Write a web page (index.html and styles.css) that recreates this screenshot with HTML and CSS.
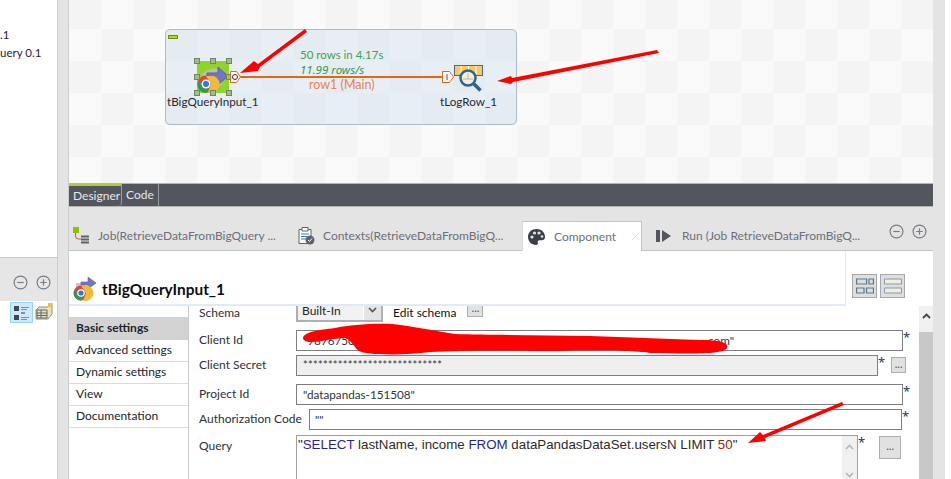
FILE: index.html
```html
<!DOCTYPE html>
<html>
<head>
<meta name="viewport" content="width=device-width, initial-scale=1">
<link rel="stylesheet" href="styles.css">
</head>
<body>
<div class="app">

  <div class="left">
    <div class="repo">
      <div>.1</div>
      <div>uery 0.1</div>
    </div>
    <div class="left-bar">
      <svg class="round-btn" viewBox="0 0 14 14"><circle cx="7" cy="7" r="6" /><path d="M4 7h6" /></svg>
      <svg class="round-btn" viewBox="0 0 14 14"><circle cx="7" cy="7" r="6" /><path d="M4 7h6M7 4v6" /></svg>
    </div>
    <div class="left-tools">
      <span class="tool-on">
        <svg width="18" height="18" viewBox="0 0 18 18"><path fill="#3f4650" d="M1 2h5v5H1zM1 11h5v5H1z"/><path fill="#8a8f96" d="M8 8h4v2H8zM8 3h8v1H8zM8 5h6v1H8zM8 13h8v1H8zM8 15h6v1H8z"/></svg>
      </span>
      <svg width="18" height="18" viewBox="0 0 18 18"><path fill="#e6e3c4" stroke="#8f8f80" d="M4 5h9l4-4v11l-4 5H1V8z"/><path fill="none" stroke="#666" d="M2 8h10v8H2zM2 11h10M2 13.500h10M6 8v8"/><path fill="#e8c43a" d="M13 1h4v4h-4z"/></svg>
    </div>
  </div>

  <div class="sash"></div>

  <div class="main">
    <div class="designer">
      <div class="canvas">
        <div class="subjob">
          <span class="collapse"></span>
        </div>

        <div class="node node-input">
          <svg width="34" height="34" viewBox="0 0 34 34">
            <rect x="1" y="1" width="32" height="32" fill="#8fd42c"/>
            <path d="M6 14q10-9 22-3l-2 14q-10 5-18-1z" fill="#b7c2a8"/>
            <path d="M11 13h11V7l10 9-10 9v-6H11z" fill="#7275c0" stroke="#5b5ea8"/>
            <circle cx="10" cy="24" r="8.500" fill="#d9483b"/>
            <path d="M2 22a8.500 8.500 0 0 0 8 11l4-7-7-1z" fill="#2f9b52"/>
            <path d="M10 16h8a8.500 8.500 0 0 1-6 16l3-8z" fill="#f0bb3b"/>
            <circle cx="10" cy="24" r="4.500" fill="#fff"/>
            <circle cx="10" cy="24" r="3" fill="#3473e6"/>
          </svg>
          <i class="grip g1"></i><i class="grip g2"></i><i class="grip g3"></i>
          <i class="grip g4"></i><i class="grip g5"></i>
          <i class="grip g6"></i><i class="grip g7"></i><i class="grip g8"></i>
        </div>
        <div class="node-label label-input">tBigQueryInput_1</div>

        <div class="link"></div>
        <svg class="port port-out" width="11" height="12" viewBox="0 0 11 12"><path d="M.5.500h6l4 5.500-4 5.500h-6z" fill="#fff" stroke="#e8670c"/><circle cx="5" cy="6" r="2.500" fill="none" stroke="#333"/></svg>
        <svg class="port port-in" width="12" height="12" viewBox="0 0 12 12"><path d="M.5.500h7l4 5.500-4 5.500h-7z" fill="#fff" stroke="#e8670c"/><path d="M5 3v6" stroke="#7a3a50"/></svg>

        <div class="stats">
          <div class="stat-count">50 rows in 4.17s</div>
          <div class="stat-rate">11.99 rows/s</div>
          <div class="stat-row">row1 (Main)</div>
        </div>

        <svg class="node node-log" width="30" height="28" viewBox="0 0 30 28">
          <rect x=".5" y=".500" width="28" height="10" fill="#f9c85f" stroke="#3e6c94"/>
          <path d="M7 1v9M14.500 1v9M22 1v9" stroke="#fff"/>
          <circle cx="14" cy="13" r="7.500" fill="#f3efd8" stroke="#2e6492" stroke-width="2.500"/>
          <path d="M14 8v6M9 14h10" stroke="#b9b9a6"/>
          <path d="M19.500 18.500l7 7" stroke="#2e6492" stroke-width="3.500"/>
        </svg>
        <div class="node-label label-log">tLogRow_1</div>
      </div>
      <div class="designer-tabs">
        <div class="dtab dtab-on">Designer</div>
        <div class="dtab">Code</div>
      </div>
    </div>

    <div class="panel">
      <div class="tabs">
        <div class="tab tab-job">
          <svg width="17" height="17" viewBox="0 0 17 17"><path fill="#8cc200" d="M0 0h6v6H0z"/><path fill="none" stroke="#c9524e" d="M2.500 6v3q0 3 3 3H8"/><path fill="#5e626b" d="M8 8.500h8v2H8zM8 11.500h8v2H8zM8 14.500h8v2H8z"/></svg>
          <span>Job(RetrieveDataFromBigQuery ...</span>
        </div>
        <div class="tab tab-ctx">
          <svg width="17" height="18" viewBox="0 0 17 18"><path fill="#fff" stroke="#5e626b" d="M1 2.500h12v14H1z"/><path fill="#fff" stroke="#5e626b" d="M4 .500h6v3.500H4z"/><path stroke="#3a7ab8" d="M3 7h8M3 9.500h6M3 12h5"/><circle cx="12" cy="13" r="4.500" fill="#5e626b"/><path d="M10 13l1.500 1.500 2.500-3" fill="none" stroke="#fff"/></svg>
          <span>Contexts(RetrieveDataFromBigQ...</span>
        </div>
        <div class="tab tab-comp">
          <svg width="17" height="16" viewBox="0 0 17 16"><path fill="#3c3f46" d="M8.500 0C3.500 0 0 3.400 0 8c0 4.400 3.600 8 8 8 1.600 0 2.200-1 1.800-2.200-.5-1.400.2-2.600 1.800-2.600h2.400c1.800 0 3-1.200 3-3.200C17 3.400 13.500 0 8.500 0z"/><circle cx="4" cy="8" r="1.600" fill="#e4e4e4"/><circle cx="6.500" cy="4" r="1.600" fill="#e4e4e4"/><circle cx="11" cy="4" r="1.600" fill="#e4e4e4"/><circle cx="14" cy="7.500" r="1.300" fill="#e4e4e4"/></svg>
          <span class="comp-name">Component</span>
          <svg class="tab-close" width="9" height="9" viewBox="0 0 9 9"><path d="M.5.500l8 8M8.500.500l-8 8" stroke="#e2e2e2"/></svg>
        </div>
        <div class="tab tab-run">
          <svg width="15" height="12" viewBox="0 0 15 12"><path fill="#53565f" d="M0 0h4v12H0zM6 0l9 6-9 6z"/></svg>
          <span>Run (Job RetrieveDataFromBigQ...</span>
        </div>
        <div class="tab-btns">
          <svg class="round-btn" viewBox="0 0 14 14"><circle cx="7" cy="7" r="6" /><path d="M4 7h6" /></svg>
          <svg class="round-btn" viewBox="0 0 14 14"><circle cx="7" cy="7" r="6" /><path d="M4 7h6M7 4v6" /></svg>
        </div>
      </div>

      <div class="head">
        <div class="title-box">
          <svg width="24" height="24" viewBox="0 0 24 24">
            <path d="M3 6h9v10H3z" fill="#c5c7c9"/>
            <path d="M8 5h7V0l8 6-8 6V8H8z" fill="#7275c0" stroke="#5b5ea8" stroke-width=".6"/>
            <circle cx="8" cy="16" r="7.500" fill="#d9483b"/>
            <path d="M1 14a7.500 7.500 0 0 0 7 9.500l3.500-6-6-1z" fill="#2f9b52"/>
            <path d="M8 8.500h7a7.500 7.500 0 0 1-5 15l3-7z" fill="#f0bb3b"/>
            <circle cx="8" cy="16" r="3.800" fill="#fff"/>
            <circle cx="8" cy="16" r="2.600" fill="#3473e6"/>
          </svg>
          <span class="title">tBigQueryInput_1</span>
        </div>
        <div class="view-btn view-btn-first">
          <svg width="18" height="16" viewBox="0 0 18 16"><path fill="none" stroke="#5c7690" stroke-width="1.200" d="M.6 1h10v5H.6zM13 1h4.400v5H13zM.6 10h7.400v5H.6zM10.500 10h7v5h-7z"/></svg>
        </div>
        <div class="view-btn">
          <svg width="18" height="16" viewBox="0 0 18 16"><path fill="#f3eeda" stroke="#7f9dbd" d="M.5 1h17v5H.5zM.5 10h17v5H.5z"/></svg>
        </div>
      </div>

      <div class="body">
        <div class="nav">
          <div class="nav-item nav-on">Basic settings</div>
          <div class="nav-item">Advanced settings</div>
          <div class="nav-item">Dynamic settings</div>
          <div class="nav-item">View</div>
          <div class="nav-item">Documentation</div>
        </div>

        <div class="form">
          <div class="row row-schema">
            <label>Schema</label>
            <div class="select"><span>Built-In</span><i><svg width="9" height="6" viewBox="0 0 9 6"><path d="M1 1l3.500 3.500L8 1" fill="none" stroke="#555" stroke-width="1.600"/></svg></i></div>
            <span class="edit-schema">Edit schema</span>
            <div class="dots dots-small">...</div>
          </div>
          <div class="row row-client">
            <label>Client Id</label>
            <div class="input input-full"><span class="client-a">"987675098</span><span>.com"</span></div>
            <b class="req">*</b>
          </div>
          <div class="row row-secret">
            <label>Client Secret</label>
            <div class="input input-secret">****************************</div>
            <b class="req">*</b>
            <div class="dots dots-secret">...</div>
          </div>
          <div class="row row-project">
            <label>Project Id</label>
            <div class="input input-full">"datapandas-151508"</div>
            <b class="req">*</b>
          </div>
          <div class="row row-auth">
            <label class="label-auth">Authorization Code</label>
            <div class="input input-auth">""</div>
            <b class="req">*</b>
          </div>
          <div class="row row-query">
            <label>Query</label>
            <div class="query">
              <div class="sql">"<span class="kw">SELECT</span> lastName, income <span class="kw">FROM</span> dataPandasDataSet.usersN LIMIT <span class="num">50</span>"</div>
              <div class="query-scroll">
                <svg width="9" height="6" viewBox="0 0 9 6"><path d="M1 5l3.500-3.500L8 5" fill="none" stroke="#b5b5b5" stroke-width="1.600"/></svg>
                <svg width="9" height="6" viewBox="0 0 9 6"><path d="M1 1l3.500 3.500L8 1" fill="none" stroke="#b5b5b5" stroke-width="1.600"/></svg>
              </div>
            </div>
            <b class="req">*</b>
            <div class="dots dots-query">...</div>
          </div>
        </div>

        <div class="vscroll">
          <div class="vscroll-up"><svg width="9" height="6" viewBox="0 0 9 6"><path d="M1 5l3.500-3.500L8 5" fill="none" stroke="#444" stroke-width="1.800"/></svg></div>
          <div class="vscroll-thumb"></div>
        </div>
      </div>
    </div>
  </div>

  <div class="sash-right"></div>
</div>

<!-- red marks drawn over the screenshot -->
<svg class="marks" width="951" height="479" viewBox="0 0 951 479">
  <path fill="#f00" d="M240 73L254 61L258 64L305 29L307 32L260 67L258 71Z"/>
  <path fill="#f00" d="M497 81L511 76L512 78L657 50L659 53L513 82L511 84Z"/>
  <path fill="#f00" d="M748 443L760 432L763 435L842 402L844 405L765 438L766 441Z"/>
  <path fill="#f00" d="M303 338C304 332 318 330 335 328C350 325 372 323 392 324C410 326 430 330 455 334C490 335 540 335 590 336C630 337 660 339 700 340C722 340 729 343 727 348C724 354 700 354 650 353C640 351 600 350 560 351C510 351 470 350 430 352C415 354 395 355 380 354C365 354 358 352 355 347C352 343 350 340 345 338C330 338 305 347 303 338Z"/>
</svg>
</body>
</html>
```

FILE: styles.css
```css
html, body {
    margin: 0;
    padding: 0;
}

body {
    width: 951px;
    height: 479px;
    overflow: hidden;
    position: relative;
    background: #fff;
    font-family: Lato, "Noto Sans", sans-serif;
    font-size: 12px;
    color: #20242c;
}

.app {
    display: flex;
    height: 479px;
}

/* left column */
.left {
    width: 57px;
    display: flex;
    flex-direction: column;
    flex: none;
    overflow: hidden;
}

.repo {
    height: 258px;
    border-bottom: 1px solid #c8c8c8;
    box-sizing: border-box;
    padding-top: 26px;
    line-height: 18px;
    font-size: 11.500px;
    color: #2a1a44;
    background: #fff;
    white-space: nowrap;
}

.left-bar {
    height: 43px;
    background: #e6e6e6;
    display: flex;
    gap: 8px;
    justify-content: flex-end;
    padding: 17px 6px 0 0;
    box-sizing: border-box;
}

.left-tools {
    flex: 1;
    display: flex;
    align-items: flex-start;
    gap: 2px;
    padding: 1px 0 0 10px;
}

.tool-on {
    display: flex;
    width: 23px;
    height: 21px;
    align-items: center;
    justify-content: center;
    background: #cde8ff;
    border: 1px solid #99d1ff;
    box-sizing: border-box;
}

.round-btn {
    width: 15px;
    height: 15px;
    fill: none;
    stroke: #777c85;
    stroke-width: 1.100;
}

.sash {
    width: 12px;
    flex: none;
    box-sizing: border-box;
    background: #e4e4e4;
    border-left: 1px solid #cdcdcd;
    border-right: 1px solid #cdcdcd;
}

.sash-right {
    width: 12px;
    flex: none;
    height: 479px;
    background: #e4e4e4;
    margin-right: 6px;
}

/* designer */
.main {
    width: 864px;
    flex: none;
    display: flex;
    flex-direction: column;
    background: #e4e4e4;
}

.designer {
    height: 207px;
    flex: none;
}

.canvas {
    height: 184px;
    position: relative;
    overflow: hidden;
    background-color: #fafafa;
    background-image: conic-gradient(#f4f4f4 25%, transparent 0 50%, #f4f4f4 0 75%, transparent 0);
    background-size: 64px 64px;
    background-position: 32px -3px;
    border-bottom: 1px solid #b5b5b5;
    box-sizing: border-box;
}

.subjob {
    position: absolute;
    left: 96px;
    top: 29px;
    width: 352px;
    height: 96px;
    box-sizing: border-box;
    border: 1px solid #a9bccd;
    border-radius: 5px;
    background: rgba(205, 223, 235, 0.42);
}

.collapse {
    position: absolute;
    left: 2px;
    top: 5px;
    width: 10px;
    height: 4px;
    background: #b9d800;
    border: 1px solid #74880a;
    box-sizing: border-box;
}

.node {
    position: absolute;
}

.node-input {
    left: 127px;
    top: 60px;
    width: 34px;
    height: 34px;
}

.node-log {
    left: 385px;
    top: 65px;
}

.grip {
    position: absolute;
    width: 6px;
    height: 6px;
    box-sizing: border-box;
    background: #a4bb92;
    border: 1px solid #6f8566;
}

.g1 { left: -2px; top: -2px; }
.g2 { left: 14px; top: -2px; }
.g3 { left: 30px; top: -2px; }
.g4 { left: -2px; top: 14px; }
.g5 { left: 30px; top: 14px; }
.g6 { left: -2px; top: 30px; }
.g7 { left: 14px; top: 30px; }
.g8 { left: 30px; top: 30px; }

.node-label {
    position: absolute;
    top: 92px;
    line-height: 18px;
    font-size: 11.700px;
    color: #1f2a33;
    white-space: nowrap;
}

.label-input { left: 98px; }
.label-log { left: 371px; }

.link {
    position: absolute;
    left: 170px;
    top: 76px;
    width: 204px;
    height: 2px;
    background: #e8670c;
}

.port {
    position: absolute;
}

.port-out { left: 161px; top: 71px; }
.port-in { left: 373px; top: 71px; }

.stats {
    position: absolute;
    left: 231px;
    top: 47px;
    line-height: 15px;
    white-space: nowrap;
}

.stat-count { color: #3fa052; font-size: 11.500px; }
.stat-rate { color: #2e9a55; font-style: italic; font-family: "Noto Sans", sans-serif; font-size: 11.500px; }
.stat-row { color: #e8825a; margin-left: 9px; font-size: 12.500px; }

.designer-tabs {
    height: 23px;
    background: #53565f;
    display: flex;
    box-sizing: border-box;
    border-bottom: 1px solid #b5b5b5;
}

.dtab {
    color: #e6e8ea;
    padding: 0 4px;
    line-height: 22px;
    border-right: 1px solid #9a9ca2;
}

.dtab-on {
    width: 53px;
    box-sizing: border-box;
    margin-top: -1px;
    border-top: 3px solid #b5cc2e;
    line-height: 20px;
    border-bottom-right-radius: 4px;
}

/* bottom panel */
.panel {
    margin-top: 14px;
    flex: 1;
    display: flex;
    flex-direction: column;
    min-height: 0;
    background: #fff;
}

.tabs {
    height: 30px;
    flex: none;
    display: flex;
    align-items: center;
    background: #e4e4e4;
    border-bottom: 1px solid #c4c4c4;
    box-sizing: border-box;
    color: #6b6f7b;
    position: relative;
}

.tab {
    display: flex;
    align-items: center;
    height: 29px;
    box-sizing: border-box;
    white-space: nowrap;
    flex: none;
}

.tab-job {
    width: 229px;
    padding-left: 4px;
    gap: 8px;
}

.tab-ctx {
    width: 224px;
    gap: 8px;
}

.tab-comp {
    width: 120px;
    padding-left: 5px;
    background: #fff;
    height: 30px;
    margin-bottom: -1px;
    border: 1px solid #c4c4c4;
    border-bottom: 0;
    border-left: 1px solid #d8d8d8;
}

.comp-name {
    margin-left: 9px;
    width: 68px;
}

.tab-close {
    margin-left: 9px;
}

.tab-run {
    padding-left: 14px;
    gap: 11px;
}

.tab-btns {
    display: flex;
    gap: 8px;
    position: absolute;
    right: 6px;
    top: 3px;
}

.head {
    height: 55px;
    flex: none;
    display: flex;
    align-items: flex-start;
}

.title-box {
    width: 777px;
    height: 55px;
    box-sizing: border-box;
    border-bottom: 2px solid #e2eaf3;
    border-right: 1px solid #e2eaf3;
    display: flex;
    align-items: flex-end;
    gap: 5px;
    padding: 0 0 3px 4px;
    flex: none;
}

.title {
    font-size: 15.400px;
    font-weight: 700;
    color: #0b0d10;
    line-height: 24px;
}

.view-btn {
    width: 25px;
    height: 24px;
    box-sizing: border-box;
    display: flex;
    align-items: center;
    justify-content: center;
    background: #dedede;
    border: 1px solid #a8a8a8;
    margin: 23px 0 0 3px;
}

.view-btn-first {
    margin-left: 6px;
}

.body {
    flex: 1;
    display: flex;
    min-height: 0;
    overflow: hidden;
}

.nav {
    width: 120px;
    flex: none;
    box-sizing: border-box;
    border-right: 1px solid #c8c8c8;
    padding-top: 11px;
}

.nav-item {
    height: 22px;
    line-height: 20px;
    padding-left: 7px;
    border-bottom: 1px solid #dcdcdc;
    box-sizing: border-box;
    color: #20242c;
}

.nav-on {
    height: 23px;
    line-height: 22px;
    background: #d3d3d3;
    border-bottom: 0;
    font-weight: 700;
}

.form {
    width: 730px;
    flex: none;
    overflow: hidden;
    padding-left: 10px;
    box-sizing: border-box;
}

.row {
    display: flex;
    align-items: flex-start;
}

.row label {
    width: 97px;
    flex: none;
    line-height: 18px;
    padding-top: 1px;
    color: #2b3038;
}

.row-schema {
    height: 17px;
    margin-top: -3px;
}

.row-client { margin-top: 10px; height: 20px; }
.row-secret { margin-top: 5px; height: 20px; }
.row-project { margin-top: 9px; height: 20px; }
.row-auth { margin-top: 5px; height: 20px; }
.row-query { margin-top: 6px; }

.row-query label {
    padding-top: 2px;
}

.select {
    width: 87px;
    height: 22px;
    margin-top: -3px;
    box-sizing: border-box;
    border: 2px solid #b0b0b0;
    border-top: 0;
    background: #f2f2f2;
    display: flex;
    justify-content: space-between;
    line-height: 21px;
    padding-left: 4px;
}

.select i {
    width: 17px;
    display: flex;
    align-items: center;
    justify-content: center;
    background: #e4e4e4;
    border-left: 1px solid #fff;
}

.edit-schema {
    margin-left: 10px;
    line-height: 19px;
    color: #0d1018;
}

.dots {
    box-sizing: border-box;
    background: #e1e1e1;
    border: 1px solid #adadad;
    color: #456;
    display: flex;
    align-items: center;
    justify-content: center;
    line-height: 10px;
    font-size: 11px;
    padding-bottom: 3px;
}

.dots-small {
    width: 16px;
    height: 19px;
    margin: -5px 0 0 11px;
    align-items: flex-end;
}

.dots-secret {
    width: 15px;
    height: 16px;
    margin: 2px 0 0 6px;
}

.dots-query {
    width: 22px;
    height: 23px;
    margin: 1px 0 0 14px;
}

.input {
    box-sizing: border-box;
    height: 21px;
    border: 1px solid #7e7e7e;
    line-height: 18px;
    padding-left: 6px;
    font-size: 11.700px;
    color: #30343c;
    background: #fff;
    white-space: nowrap;
    overflow: hidden;
}

.input-full { width: 607px; }

.input-secret {
    width: 582px;
    background: #efefef;
    font-size: 11px;
    letter-spacing: 0.300px;
}

.input-auth {
    width: 593px;
    padding-left: 5px;
}

.label-auth {
    width: 110px !important;
}

.client-a { margin-right: 337px; }

.req {
    font-weight: 400;
    color: #1f3a5c;
    font-family: "Noto Sans", sans-serif;
    font-size: 13px;
    line-height: 14px;
}

.query {
    width: 562px;
    height: 60px;
    box-sizing: border-box;
    border: 1px solid #a0a0a0;
    display: flex;
    justify-content: space-between;
    flex: none;
}

.sql {
    font-family: "Liberation Sans", Arial, sans-serif;
    font-size: 13.330px;
    line-height: 18px;
    color: #2b2b2b;
    white-space: nowrap;
    padding-left: 1px;
}

.kw { color: #2a1fa0; }
.num { color: #a82000; }

.query-scroll {
    width: 15px;
    background: #f0f0f0;
    display: flex;
    flex-direction: column;
    justify-content: space-between;
    align-items: center;
    padding: 8px 0 2px;
    box-sizing: border-box;
    height: 44px;
}

.vscroll {
    width: 14px;
    flex: none;
    display: flex;
    flex-direction: column;
    background: #f0f0f0;
}

.vscroll-up {
    height: 26px;
    display: flex;
    align-items: center;
    justify-content: center;
    padding-bottom: 6px;
    box-sizing: border-box;
}

.vscroll-thumb {
    flex: 1;
    background: #c8c8c8;
}

.marks {
    position: absolute;
    left: 0;
    top: 0;
    pointer-events: none;
}
```
